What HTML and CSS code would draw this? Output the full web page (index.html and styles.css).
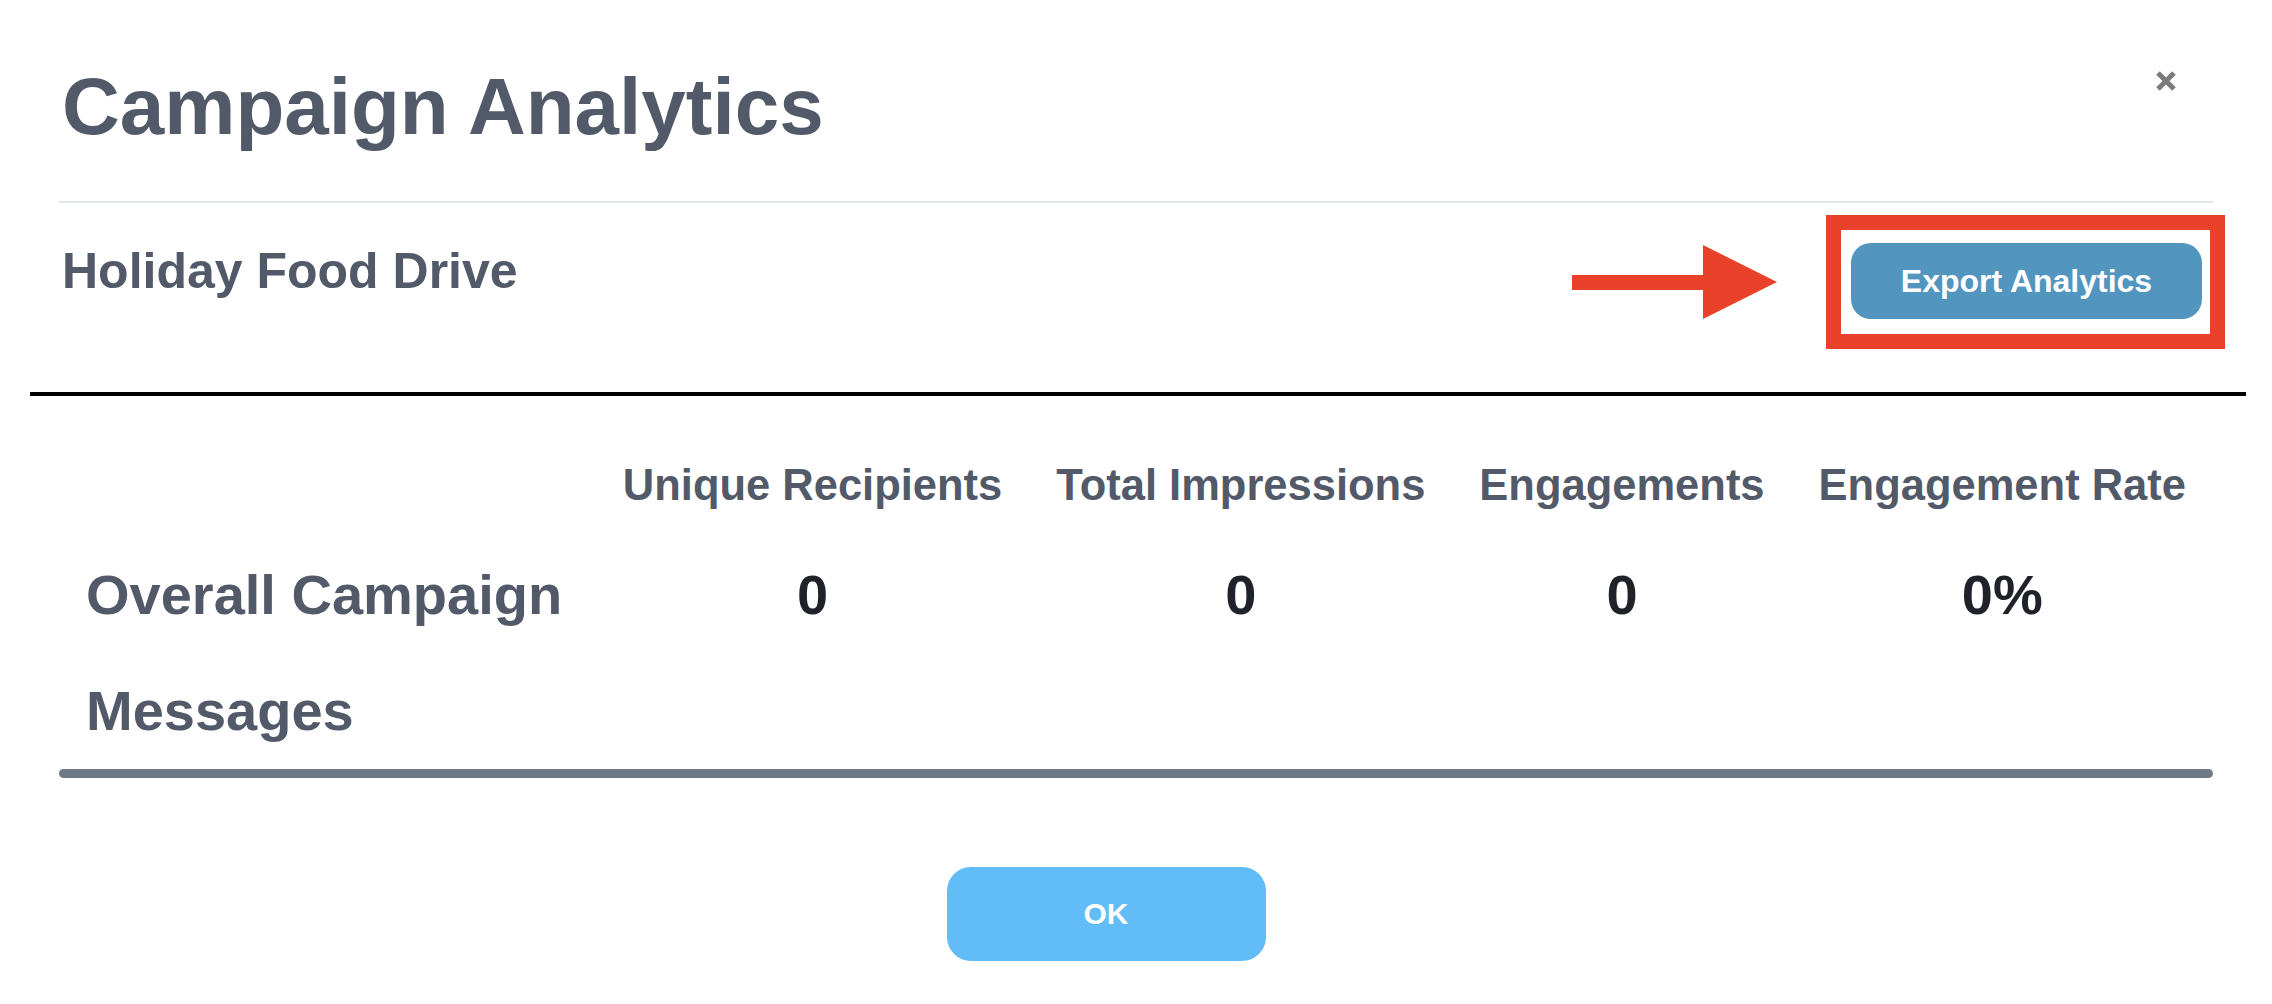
FILE: index.html
```html
<!DOCTYPE html>
<html lang="en">
<head>
  <meta charset="UTF-8" />
  <meta name="viewport" content="width=device-width, initial-scale=1.0"/>
  <title>Campaign Analytics</title>
  <link rel="stylesheet" href="styles.css">
</head>
<body>
  <div class="dialog">
    <div class="dialog-header">
      <h1>Campaign Analytics</h1>
      <span class="close">
        <svg width="22" height="22" viewBox="0 0 22 22">
          <path d="M3 3 L19 19 M19 3 L3 19" stroke="#7b7b7b" stroke-width="5" fill="none"/>
        </svg>
      </span>
    </div>

    <div class="subheader">
      <h2>Holiday Food Drive</h2>
      <div class="export-area">
        <!-- pointer to the export button -->
        <svg class="arrow" width="205" height="74" viewBox="0 0 205 74">
          <rect x="0" y="30" width="132" height="15" fill="#e9412a"/>
          <polygon points="131,0 205,37 131,74" fill="#e9412a"/>
        </svg>
        <div class="highlight">
          <button class="btn-export">Export Analytics</button>
        </div>
      </div>
    </div>
  </div>

  <div class="rule"></div>

  <div class="dialog-body">
    <div class="stats">
      <div class="cell"></div>
      <div class="cell head">Unique Recipients</div>
      <div class="cell head">Total Impressions</div>
      <div class="cell head">Engagements</div>
      <div class="cell head">Engagement Rate</div>

      <div class="cell label">Overall Campaign</div>
      <div class="cell value">0</div>
      <div class="cell value">0</div>
      <div class="cell value">0</div>
      <div class="cell value">0%</div>
    </div>

    <h3 class="section">Messages</h3>
    <div class="bar"></div>

    <div class="footer">
      <button class="btn-ok">OK</button>
    </div>
  </div>
</body>
</html>
```

FILE: styles.css
```css
body {
  margin: 0;
  background: #fff;
  font-family: "Liberation Sans", Arial, sans-serif;
  font-weight: bold;
  color: #525a69;
}

.dialog {
  padding: 67px 59px 0;
}

.dialog-header {
  display: flex;
  justify-content: space-between;
  align-items: flex-start;
  padding-bottom: 54px;
  border-bottom: 2px solid #e1e4e8;
}

h1 {
  margin: 0 0 0 3px;
  font-size: 80px;
  line-height: 80px;
}

.close {
  display: block;
  margin: 3px 36px 0 0;
  cursor: pointer;
}

.close svg {
  display: block;
}

.subheader {
  display: flex;
  justify-content: space-between;
  align-items: flex-start;
  margin-top: 12px;
}

h2 {
  margin: 31px 0 0 3px;
  font-size: 50px;
  line-height: 50px;
}

.export-area {
  display: flex;
  align-items: flex-start;
  margin-right: -12px;
}

.arrow {
  display: block;
  margin: 30px 49px 0 0;
}

.highlight {
  border: 15px solid #e9412a;
  padding: 13px 8px 15px 10px;
}

.btn-export {
  display: block;
  width: 351px;
  height: 76px;
  padding: 0;
  border: none;
  border-radius: 20px;
  background: #5295bf;
  color: #fff;
  font-family: inherit;
  font-weight: bold;
  font-size: 32px;
  cursor: pointer;
}

.rule {
  height: 4px;
  margin: 43px 26px 0 30px;
  background: #000;
}

.dialog-body {
  padding: 0 59px;
}

.stats {
  display: grid;
  grid-template-columns: 1fr repeat(4, auto);
  row-gap: 60px;
  margin-top: 67px;
}

.cell {
  padding: 0 27px;
  white-space: nowrap;
}

.head {
  font-size: 43.5px;
  line-height: 44px;
  text-align: center;
}

.label {
  font-size: 56px;
  line-height: 56px;
}

.value {
  font-size: 56px;
  line-height: 56px;
  text-align: center;
  color: #1f2329;
}

.section {
  margin: 60px 0 0;
  padding: 0 27px;
  font-size: 56px;
  line-height: 56px;
}

.bar {
  height: 9px;
  margin-top: 30px;
  border-radius: 5px;
  background: #6f7a87;
}

.footer {
  display: flex;
  justify-content: center;
  margin-top: 89px;
  padding-right: 60px;
}

.btn-ok {
  width: 319px;
  height: 94px;
  border: none;
  border-radius: 24px;
  background: #61bcf8;
  color: #fff;
  font-family: inherit;
  font-weight: bold;
  font-size: 30px;
  cursor: pointer;
}
```
